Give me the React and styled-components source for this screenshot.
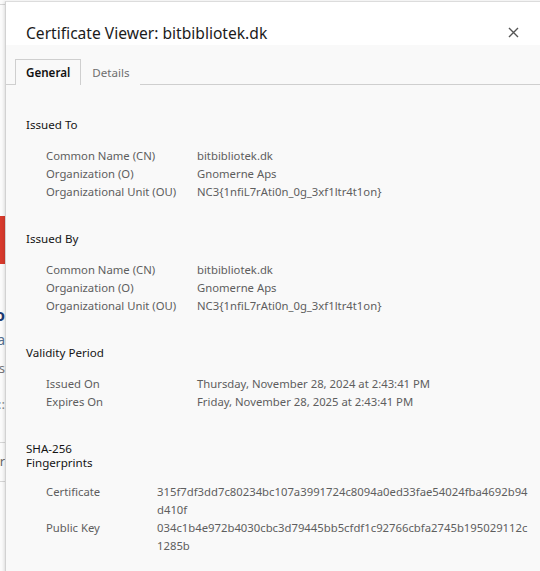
import React from 'react';
import styled, { createGlobalStyle } from 'styled-components';

const GlobalStyle = createGlobalStyle`
  html, body {
    margin: 0;
    padding: 0;
    background: #ffffff;
    overflow: hidden;
  }
  body {
    font-family: "Noto Sans", "Open Sans", sans-serif;
  }
`;

const Page = styled.div`
  position: relative;
  width: 540px;
  height: 571px;
  overflow: hidden;
  background: #ffffff;
`;

// the page behind the dialog; only a thin sliver of it shows on the left
const Backdrop = styled.div`
  width: 5px;
  height: 100%;
  overflow: hidden;
  display: flex;
  flex-direction: column;
  background: #fbfbfb;
`;

const Rule = styled.div`
  height: 1px;
  background: #d6d6d6;
  margin-top: ${p => p.$top}px;
`;

const Banner = styled.div`
  height: 48px;
  margin-top: ${p => p.$top}px;
  background: #d83b2d;
`;

const Fragment = styled.div`
  display: flex;
  justify-content: flex-end;
  white-space: nowrap;
  margin-top: ${p => p.$top}px;
  height: ${p => p.$h}px;
  line-height: ${p => p.$h}px;
  font-size: ${p => p.$size}px;
  font-weight: ${p => (p.$bold ? 700 : 400)};
  color: ${p => p.$color};
`;

const Dialog = styled.div`
  position: absolute;
  left: 5px;
  top: 1px;
  right: -20px;
  bottom: -20px;
  background: #f9f9f9;
  border-top: 1px solid #dcdcdc;
  border-left: 1px solid #d2d2d2;
  box-shadow: -1px 0 3px rgba(0, 0, 0, 0.12);
  display: flex;
  flex-direction: column;
`;

const Header = styled.div`
  height: 43px;
  background: #ffffff;
  display: flex;
  align-items: center;
  padding: 0 40px 0 20px;
  justify-content: space-between;
`;

const Title = styled.h1`
  margin: 19px 0 0;
  font-size: 15.6px;
  font-weight: 400;
  color: #1b1b1b;
`;

const CloseButton = styled.button`
  border: 0;
  background: transparent;
  padding: 0;
  margin-top: 18px;
  width: 14px;
  height: 14px;
  display: flex;
  align-items: center;
  justify-content: center;
  cursor: pointer;
`;

const TabBar = styled.div`
  margin-top: 14px;
  padding-left: 9px;
  display: flex;
  align-items: flex-end;
  border-bottom: 1px solid #cfcfcf;
  height: 25px;
`;

const Tab = styled.div`
  box-sizing: border-box;
  height: 26px;
  padding: 0 10px 0 10px;
  display: flex;
  align-items: center;
  font-size: 11.6px;
  color: ${p => (p.$active ? '#111' : '#6f6f6f')};
  font-weight: ${p => (p.$active ? 600 : 400)};
  border: 1px solid ${p => (p.$active ? '#cfcfcf' : 'transparent')};
  border-bottom: 0;
  background: #f9f9f9;
  margin-bottom: -1px;
`;

const Body = styled.div`
  padding: 33px 0 0 20px;
  display: flex;
  flex-direction: column;
  gap: 31px;
`;

const Section = styled.section`
  display: flex;
  flex-direction: column;
  gap: ${p => (p.$tight ? 13 : 15)}px;
`;

const Heading = styled.h2`
  margin: 0;
  font-size: 11.6px;
  line-height: 14px;
  font-weight: 400;
  color: #141414;
  max-width: ${p => (p.$narrow ? '70px' : 'none')};
`;

const Fields = styled.div`
  display: grid;
  grid-template-columns: ${p => p.$label}px 1fr;
  padding-left: 20px;
  font-size: 11.3px;
  line-height: 18px;
  color: #5e5e5e;
`;

const Label = styled.div``;

const Value = styled.div`
  display: flex;
  flex-direction: column;
  white-space: nowrap;
`;

const CloseIcon = () => (
  <svg width="11" height="11" viewBox="0 0 11 11">
    <path d="M1 1 L10 10 M10 1 L1 10" stroke="#555" strokeWidth="1.4" fill="none" />
  </svg>
);

const subject = [
  ['Common Name (CN)', ['bitbibliotek.dk']],
  ['Organization (O)', ['Gnomerne Aps']],
  ['Organizational Unit (OU)', ['NC3{1nfiL7rAti0n_0g_3xf1ltr4t1on}']],
];

const sections = [
  { title: 'Issued To', label: 151, rows: subject },
  { title: 'Issued By', label: 151, rows: subject },
  {
    title: 'Validity Period',
    label: 151,
    rows: [
      ['Issued On', ['Thursday, November 28, 2024 at 2:43:41 PM']],
      ['Expires On', ['Friday, November 28, 2025 at 2:43:41 PM']],
    ],
  },
  {
    title: 'SHA-256 Fingerprints',
    narrow: true,
    label: 111,
    rows: [
      ['Certificate', ['315f7df3dd7c80234bc107a3991724c8094a0ed33fae54024fba4692b94', 'd410f']],
      ['Public Key', ['034c1b4e972b4030cbc3d79445bb5cfdf1c92766cbfa2745b195029112c', '1285b']],
    ],
  },
];

export default function App() {
  return (
    <>
      <GlobalStyle />
      <Page>
        <Backdrop>
          <Rule $top={4} />
          <Banner $top={211} />
          <Fragment $top={42} $h={18} $size={16} $bold $color="#1d3b73">Info</Fragment>
          <Fragment $top={8} $h={16} $size={14} $color="#55708f">Data</Fragment>
          <Fragment $top={12} $h={16} $size={13} $color="#777">es</Fragment>
          <Fragment $top={20} $h={16} $size={13} $color="#888">::</Fragment>
          <Rule $top={30} />
          <Fragment $top={10} $h={16} $size={13} $color="#666">r</Fragment>
          <Rule $top={12} />
        </Backdrop>
        <Dialog>
          <Header>
            <Title>Certificate Viewer: bitbibliotek.dk</Title>
            <CloseButton aria-label="Close">
              <CloseIcon />
            </CloseButton>
          </Header>
          <TabBar>
            <Tab $active>General</Tab>
            <Tab>Details</Tab>
          </TabBar>
          <Body>
            {sections.map(s => (
              <Section key={s.title} $tight={s.narrow}>
                <Heading $narrow={s.narrow}>{s.title}</Heading>
                <Fields $label={s.label}>
                  {s.rows.map(([label, lines]) => (
                    <React.Fragment key={label}>
                      <Label>{label}</Label>
                      <Value>
                        {lines.map(line => (
                          <span key={line}>{line}</span>
                        ))}
                      </Value>
                    </React.Fragment>
                  ))}
                </Fields>
              </Section>
            ))}
          </Body>
        </Dialog>
      </Page>
    </>
  );
}
